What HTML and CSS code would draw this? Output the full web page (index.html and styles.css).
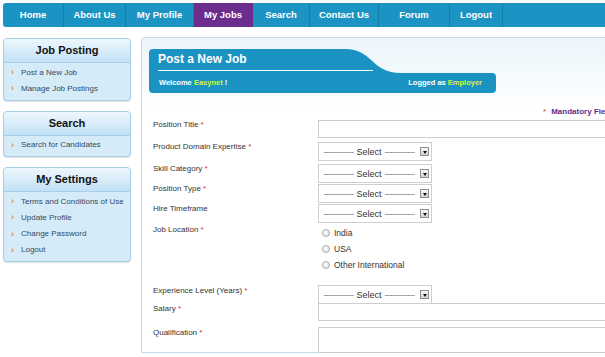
FILE: index.html
```html
<!DOCTYPE html>
<html lang="en">
<head>
  <meta charset="UTF-8" />
  <title>Post a New Job</title>
  <link rel="stylesheet" href="styles.css">
</head>
<body>
  <div class="page">
    <!-- Top navigation -->
    <ul class="nav">
      <li><a href="#">Home</a></li>
      <li><a href="#">About Us</a></li>
      <li><a href="#">My Profile</a></li>
      <li class="active"><a href="#">My Jobs</a></li>
      <li><a href="#">Search</a></li>
      <li><a href="#">Contact Us</a></li>
      <li><a href="#">Forum</a></li>
      <li><a href="#">Logout</a></li>
    </ul>

    <div class="layout">
      <!-- Left menu boxes -->
      <aside class="sidebar">
        <div class="box">
          <h3>Job Posting</h3>
          <ul>
            <li><a href="#">Post a New Job</a></li>
            <li><a href="#">Manage Job Postings</a></li>
          </ul>
        </div>
        <div class="box">
          <h3>Search</h3>
          <ul>
            <li><a href="#">Search for Candidates</a></li>
          </ul>
        </div>
        <div class="box">
          <h3>My Settings</h3>
          <ul>
            <li><a href="#">Terms and Conditions of Use</a></li>
            <li><a href="#">Update Profile</a></li>
            <li><a href="#">Change Password</a></li>
            <li><a href="#">Logout</a></li>
          </ul>
        </div>
      </aside>

      <!-- Main content panel -->
      <main class="panel">
        <div class="banner">
          <svg class="banner-bg" width="347" height="44" viewBox="0 0 347 44">
            <path d="M0 4 Q0 0 4 0 L196 0 C224 0 222 24 252 24 L343 24 Q347 24 347 28 L347 40 Q347 44 343 44 L4 44 Q0 44 0 40 Z" fill="#1a93c3"/>
          </svg>
          <h2>Post a New Job</h2>
          <div class="banner-info">
            <span>Welcome <em>Easynet</em> !</span>
            <span>Logged as <em>Employer</em></span>
          </div>
        </div>

        <p class="mandatory"><span class="req">*</span>Mandatory Fields</p>

        <div class="form">
          <div class="row r22">
            <label>Position Title <span class="req">*</span></label>
            <div class="input"></div>
          </div>
          <div class="row r22">
            <label>Product Domain Expertise <span class="req">*</span></label>
            <div class="select"><span class="dash">------------</span> Select <span class="dash">------------</span><span class="arrow"></span></div>
          </div>
          <div class="row">
            <label>Skill Category <span class="req">*</span></label>
            <div class="select"><span class="dash">------------</span> Select <span class="dash">------------</span><span class="arrow"></span></div>
          </div>
          <div class="row">
            <label>Position Type <span class="req">*</span></label>
            <div class="select"><span class="dash">------------</span> Select <span class="dash">------------</span><span class="arrow"></span></div>
          </div>
          <div class="row">
            <label>Hire Timeframe</label>
            <div class="select"><span class="dash">------------</span> Select <span class="dash">------------</span><span class="arrow"></span></div>
          </div>
          <div class="row r61">
            <label class="low">Job Location <span class="req">*</span></label>
            <div class="radios">
              <div class="radio"><span class="dot"></span>India</div>
              <div class="radio"><span class="dot"></span>USA</div>
              <div class="radio"><span class="dot"></span>Other International</div>
            </div>
          </div>
          <div class="row r18">
            <label class="low">Experience Level (Years) <span class="req">*</span></label>
            <div class="select"><span class="dash">------------</span> Select <span class="dash">------------</span><span class="arrow"></span></div>
          </div>
          <div class="row r24">
            <label class="low">Salary <span class="req">*</span></label>
            <div class="input"></div>
          </div>
          <div class="row r26">
            <label class="low">Qualification <span class="req">*</span></label>
            <div class="input tall"></div>
          </div>
        </div>
      </main>
    </div>
  </div>
</body>
</html>
```

FILE: styles.css
```css
/* ==============================================
   PAGE
   ============================================== */
body {
  margin: 0;
  background: #fff;
  font-family: "Liberation Sans", Arial, sans-serif;
  color: #333;
  overflow: hidden;
}
.page {
  width: 660px;
  padding: 3px 0 0 3px;
}
a {
  text-decoration: none;
  color: inherit;
}

/* ==============================================
   TOP NAVIGATION
   ============================================== */
.nav {
  display: flex;
  height: 24px;
  margin: 0;
  padding: 0;
  list-style: none;
  background: #1b94c4;
  border-radius: 3px 0 0 3px;
}
.nav li {
  box-sizing: border-box;
  border-right: 1px solid #157ca6;
  text-align: center;
  line-height: 24px;
  font-size: 9.5px;
  font-weight: bold;
  color: #fff;
}
.nav li:nth-child(1) { width: 61px; }
.nav li:nth-child(2) { width: 62px; }
.nav li:nth-child(3) { width: 68px; }
.nav li:nth-child(4) { width: 59px; }
.nav li:nth-child(5) { width: 57px; }
.nav li:nth-child(6) { width: 69px; }
.nav li:nth-child(7) { width: 71px; }
.nav li:nth-child(8) { width: 53px; }
.nav li.active {
  background: #6c2d8e;
  border-right-color: #6c2d8e;
}

/* ==============================================
   LAYOUT
   ============================================== */
.layout {
  display: flex;
  align-items: flex-start;
  gap: 10px;
  margin-top: 10px;
}

/* ==============================================
   SIDEBAR BOXES
   ============================================== */
.sidebar {
  width: 128px;
  padding-top: 1px;
  flex-shrink: 0;
}
.box {
  border: 1px solid #a6cfe7;
  border-radius: 4px;
  background: #d6ebf8;
  box-shadow: 0 1px 1px rgba(0, 0, 0, 0.12);
  margin-bottom: 10px;
}
.box h3 {
  margin: 0;
  height: 23px;
  line-height: 23px;
  text-align: center;
  font-size: 11px;
  font-weight: bold;
  color: #111;
  background: linear-gradient(#eef7fd, #c2e1f5);
  border-bottom: 1px solid #a9cfe8;
  border-radius: 3px 3px 0 0;
}
.box ul {
  list-style: none;
  margin: 0;
  padding: 1px 0 3px 7px;
}
.box li {
  display: flex;
  align-items: center;
  height: 16.3px;
  font-size: 8px;
  color: #2f4a66;
}
.box li::before {
  content: "›";
  width: 10px;
  font-size: 9px;
  line-height: 10px;
  font-weight: bold;
  color: #e58a3a;
}

/* ==============================================
   MAIN PANEL
   ============================================== */
.panel {
  width: 500px;
  height: 316px;
  flex-shrink: 0;
  box-sizing: border-box;
  border: 1px solid #c3dce8;
  border-radius: 4px 4px 0 0;
  background: linear-gradient(#eaf5fb, #fff 70px);
  padding: 11px 0 0 7px;
}
.banner {
  position: relative;
  width: 347px;
  height: 44px;
  color: #fff;
}
.banner-bg {
  position: absolute;
  top: 0;
  left: 0;
}
.banner h2 {
  position: relative;
  margin: 0 0 0 9px;
  width: 215px;
  height: 21px;
  line-height: 21px;
  font-size: 12px;
  font-weight: bold;
  border-bottom: 1px solid #fff;
}
.banner-info {
  position: relative;
  display: flex;
  justify-content: space-between;
  padding: 3px 14px 0 10px;
  line-height: 18px;
  font-size: 7.5px;
  font-weight: bold;
}
.banner-info em {
  font-style: normal;
  color: #d6f53a;
}

.mandatory {
  margin: 14px 0 3px;
  padding-right: 23px;
  text-align: right;
  line-height: 10px;
  font-size: 8px;
  font-weight: bold;
  color: #5b2c8c;
}
.mandatory .req {
  margin-right: 5px;
}
.req {
  color: #d9312b;
  font-weight: normal;
}

/* ==============================================
   FORM ROWS
   ============================================== */
.form {
  padding-left: 4px;
}
.row {
  display: flex;
  align-items: flex-start;
  height: 20px;
}
.row.r22 { height: 22px; }
.row.r61 { height: 61px; }
.row.r18 { height: 18px; }
.row.r24 { height: 24px; }
.row.r26 { height: 26px; }
.row label {
  width: 165px;
  flex-shrink: 0;
  line-height: 10px;
  font-size: 8px;
  color: #333;
}
.row label.low {
  padding-top: 1px;
}
.input {
  width: 300px;
  height: 18px;
  box-sizing: border-box;
  border: 1px solid #cdcdcd;
  background: #fff;
}
.input.tall {
  height: 26px;
}
.select {
  display: flex;
  align-items: center;
  justify-content: center;
  gap: 3px;
  width: 114px;
  height: 19px;
  box-sizing: border-box;
  border: 1px solid #cfcfcf;
  background: #fff;
  padding: 0 12px 0 0;
  position: relative;
  font-size: 9px;
  color: #333;
}
.select .dash {
  color: #777;
  letter-spacing: -0.5px;
}
.select .arrow {
  position: absolute;
  right: 2px;
  top: 4px;
  width: 9px;
  height: 9px;
  box-sizing: border-box;
  border: 1px solid #8f8f8f;
  background: linear-gradient(#f6f6f6, #d4d4d4);
}
.select .arrow::after {
  content: "";
  position: absolute;
  left: 1.5px;
  top: 2.5px;
  border-left: 2.5px solid transparent;
  border-right: 2.5px solid transparent;
  border-top: 3px solid #111;
}

/* Job location radios */
.radios {
  padding: 1px 0 0 4px;
}
.radio {
  display: flex;
  align-items: center;
  height: 16px;
  font-size: 8.5px;
  color: #333;
}
.radio .dot {
  width: 8px;
  height: 8px;
  box-sizing: border-box;
  border: 1px solid #a9a9a9;
  border-radius: 50%;
  background: radial-gradient(circle at 40% 40%, #fff, #dcdcdc);
  margin-right: 4px;
}
```
